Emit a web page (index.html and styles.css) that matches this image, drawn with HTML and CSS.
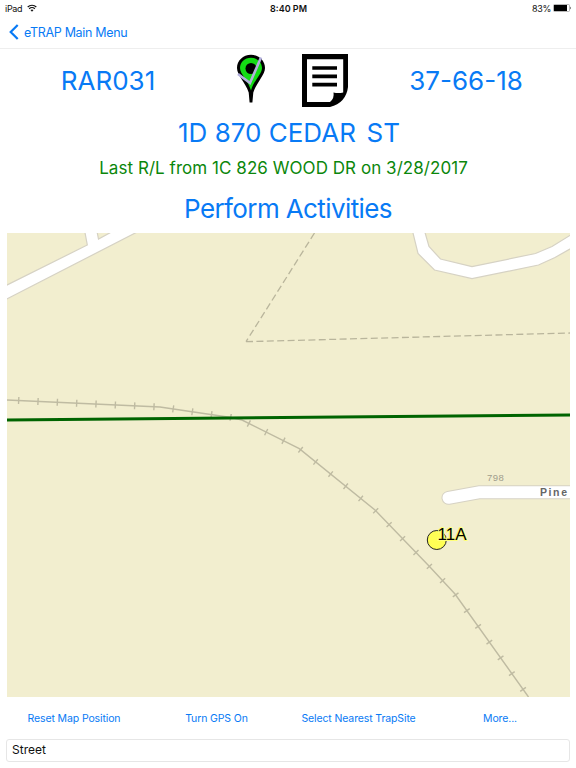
FILE: index.html
```html
<!DOCTYPE html>
<html lang="en">
<head>
  <meta charset="UTF-8">
  <meta name="viewport" content="width=device-width, initial-scale=1.0">
  <title>eTRAP</title>
  <link rel="stylesheet" href="styles.css">
</head>
<body>
  <div class="status-bar">
    <div class="device">
      <span>iPad</span>
      <svg class="wifi" viewBox="0 0 10 8">
        <path d="M0.7 3a6.2 6.2 0 0 1 8.6 0M2.2 4.8a4 4 0 0 1 5.6 0" fill="none" stroke="#111" stroke-width="1.2"/>
        <path d="M3.5 6.1a2.2 2.2 0 0 1 3 0L5 7.7z" fill="#111"/>
      </svg>
    </div>
    <div class="clock">8:40 PM</div>
    <div class="power">
      <span>83%</span>
      <svg class="battery" viewBox="0 0 19 8">
        <rect x="0.5" y="0.5" width="16" height="7" rx="1" fill="#fff" stroke="#999" stroke-width="0.7"/>
        <rect x="1" y="1" width="13" height="6" fill="#000"/>
        <path d="M17.3 2.5q1.4 1.5 0 3z" fill="#000"/>
      </svg>
    </div>
  </div>

  <nav class="nav-bar">
    <a class="back">
      <svg class="chevron" viewBox="0 0 10 16"><path d="M8.700 1L1.700 8l7 7" fill="none" stroke="#087af5" stroke-width="2.200"/></svg>
      <span>eTRAP Main Menu</span>
    </a>
  </nav>

  <div class="header">
    <a class="route">RAR031</a>
    <div class="icons">
      <svg class="pin" viewBox="0 0 30 50">
        <path d="M15 0.800C7 0.800 1 6.800 1 14c0 7 8.500 14.500 11.700 24.500L13.600 48.500h2.800L17.300 38.500C20.500 28.500 29 21 29 14 29 6.800 23 0.800 15 0.800z" fill="#000"/>
        <path d="M15 3.800C8.600 3.800 4 8.500 4 14c0 6 8.200 12.500 11 22.500C17.800 26.500 26 20 26 14 26 8.500 21.400 3.800 15 3.800z" fill="#14dc14"/>
        <circle cx="15" cy="14.500" r="5.500" fill="#000"/>
        <path d="M2 20L14 29 25 3.500" fill="none" stroke="#b3b0dc" stroke-width="2.600"/>
      </svg>
      <svg class="note" viewBox="0 0 46 53">
        <path d="M0 0h46v33q-2 16-18 20H0z" fill="#000"/>
        <path d="M5 5.300h36.200v33.200q-5 1-9.700 0q1 6-3.500 9.500H5z" fill="#fff"/>
        <path d="M10.300 14H35M10.300 22.300H35M10.300 30.700H35" stroke="#000" stroke-width="3.700"/>
      </svg>
    </div>
    <a class="code">37-66-18</a>
  </div>

  <div class="address"><a>1D 870 CEDAR<span class="gap">&nbsp; </span>ST</a></div>
  <div class="last-read">Last R/L from 1C 826 WOOD DR on 3/28/2017</div>
  <div class="perform"><a>Perform Activities</a></div>

  <svg class="map" viewBox="0 0 563 464">
    <!-- streets -->
    <g class="street">
      <path d="M-5 54.500L80.300 12 77.300-4H89.500L91.500 6 110-4H136L-5 68.500z"/>
      <path d="M405-4L411 20.500 427.500 37 465 45.700 531.500 32 548 24.500 570 12V-2L545 13.500 528.500 20.500 465 33.700 433.500 26 422 13.500 417-4z"/>
    </g>
    <path class="street-case" d="M441.500 264.800L473 259.200H570"/>
    <path class="street-fill" d="M441.500 264.800L473 259.200H570"/>

    <!-- parcel line -->
    <path class="parcel" d="M307.500 0L239 108.700"/>
    <path class="parcel" d="M239 108.700L563 100"/>

    <!-- railroad -->
    <path class="rail" d="M0 167L153 174 185 178.700 224 184.500 235 187 292.300 215.700 368 277 422 333 448 361 521.500 464"/>
    <path class="rail-ties" d="M0 167L153 174 185 178.700 224 184.500 235 187 292.300 215.700 368 277 422 333 448 361 521.500 464"/>

    <path class="section-line" d="M0 187L563 182"/>

    <text class="block-number" x="480" y="247.500">798</text>
    <text class="street-name" x="533" y="262.500">Pine</text>

    <!-- trap site -->
    <circle class="trap" cx="429.800" cy="307" r="9.500"/>
    <text class="trap-label" x="430.500" y="306.800">11A</text>
  </svg>

  <div class="toolbar">
    <a class="reset">Reset Map Position</a>
    <a class="gps">Turn GPS On</a>
    <a class="nearest">Select Nearest TrapSite</a>
    <a class="more">More...</a>
  </div>

  <div class="street-field">Street</div>
</body>
</html>
```
FILE: styles.css
```css
body {
  margin: 0;
  height: 768px;
  overflow: hidden;
  display: flex;
  flex-direction: column;
  background: #fff;
  color: #111;
  font-family: Inter, "Liberation Sans", sans-serif;
}

a {
  color: #087af5;
}

svg {
  display: block;
  flex: none;
}

.status-bar {
  display: grid;
  grid-template-columns: 1fr 1fr 1fr;
  align-items: center;
  height: 16px;
  padding: 0 4px 0 5px;
  font-size: 9px;
}

.device, .power {
  display: flex;
  align-items: center;
  gap: 5px;
  letter-spacing: -0.3px;
}

.power {
  justify-content: flex-end;
  gap: 2px;
}

.clock {
  text-align: center;
  font-weight: 600;
}

.wifi {
  width: 10px;
  height: 8px;
}

.battery {
  width: 19px;
  height: 8px;
}

.nav-bar {
  height: 32px;
  border-bottom: 1px solid #eee;
}

.back {
  display: flex;
  align-items: center;
  gap: 5px;
  height: 32px;
  padding-left: 9px;
  font-size: 12.5px;
  letter-spacing: -0.32px;
}

.chevron {
  width: 10px;
  height: 16px;
}

.header {
  display: grid;
  grid-template-columns: 216px 140px 220px;
  align-items: center;
  height: 63px;
  text-align: center;
  font-size: 26px;
}

.icons {
  display: flex;
  gap: 36px;
  padding-left: 20px;
}

.pin {
  width: 30px;
  height: 50px;
}

.note {
  width: 46px;
  height: 53px;
}

.address {
  height: 42px;
  line-height: 41px;
  padding-left: 2px;
  text-align: center;
  font-size: 26px;
}

.gap {
  letter-spacing: -2px;
}

.last-read {
  height: 30px;
  line-height: 29px;
  padding-right: 9px;
  text-align: center;
  font-size: 17px;
  letter-spacing: 0.05px;
  color: #0b870b;
}

.perform {
  height: 49px;
  line-height: 50px;
  text-align: center;
  font-size: 26px;
  letter-spacing: -0.6px;
}

.map {
  width: 563px;
  height: 464px;
  margin-left: 7px;
  background: #f2eecf;
}

.street {
  fill: #fff;
  stroke: #d6d2c4;
  stroke-width: 1.2;
}

.street-case, .street-fill {
  fill: none;
  stroke: #d6d2c4;
  stroke-width: 14;
  stroke-linecap: round;
  stroke-linejoin: round;
}

.street-fill {
  stroke: #fff;
  stroke-width: 12;
}

.parcel {
  fill: none;
  stroke: #b9b59c;
  stroke-width: 1.3;
  stroke-dasharray: 7 3.4;
}

.rail, .rail-ties {
  fill: none;
  stroke: #bfbba2;
  stroke-width: 1.4;
}

.rail-ties {
  stroke-width: 7;
  stroke-dasharray: 1.4 17.95;
  stroke-dashoffset: -11;
}

.section-line {
  stroke: #006400;
  stroke-width: 3;
}

.block-number {
  font: 9.5px "Liberation Sans", sans-serif;
  letter-spacing: 0.5px;
  fill: #a09d8c;
}

.street-name {
  font: bold 10.5px "Liberation Sans", sans-serif;
  letter-spacing: 1.6px;
  fill: #666;
}

.trap {
  fill: #ffff55;
  stroke: #222;
}

.trap-label {
  font: 17px "Liberation Sans", sans-serif;
  fill: #000;
  stroke: #ffff7a;
  stroke-width: 2px;
  paint-order: stroke;
}

.toolbar {
  display: grid;
  grid-template-columns: 148px 137px 147px 1fr;
  align-items: center;
  height: 42px;
  text-align: center;
  font-size: 10.5px;
  letter-spacing: -0.12px;
}

.more {
  padding-right: 8px;
}

.street-field {
  box-sizing: border-box;
  height: 23px;
  margin: 0 6px;
  padding-left: 5px;
  border: 1px solid #e6e6e6;
  border-radius: 3px;
  line-height: 20px;
  font-size: 12px;
}
```
